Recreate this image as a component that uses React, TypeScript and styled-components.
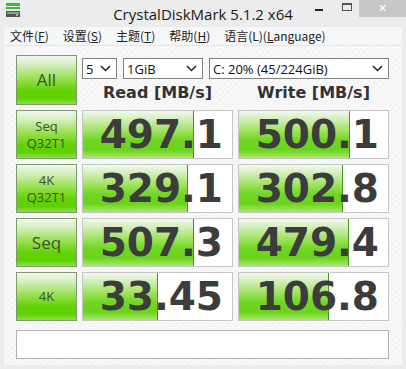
import React from "react";
import styled, { createGlobalStyle } from "styled-components";

const GlobalStyle = createGlobalStyle`
  html, body {
    margin: 0;
    padding: 0;
  }
  body {
    width: 406px;
    height: 369px;
    overflow: hidden;
    background: #ececec;
  }
`;

type Row = {
  label: string[];
  big?: boolean;
  read: string;
  write: string;
};

const rows: Row[] = [
  { label: ["Seq", "Q32T1"], read: "497.1", write: "500.1" },
  { label: ["4K", "Q32T1"], read: "329.1", write: "302.8" },
  { label: ["Seq"], big: true, read: "507.3", write: "479.4" },
  { label: ["4K"], read: "33.45", write: "106.8" },
];

const menus: [string, string, string][] = [
  ["文件(", "F", ")"],
  ["设置(", "S", ")"],
  ["主题(", "T", ")"],
  ["帮助(", "H", ")"],
  ["语言(L)(", "L", "anguage)"],
];

// log scale meter, like CDM
const barWidth = (v: string) => Math.max(0, 27 + 30.7 * Math.log10(parseFloat(v)));

const DriveIcon = () => (
  <svg width="16" height="16" viewBox="0 0 16 16">
    <rect x="1" y="1" width="14" height="3" fill="#3cb83c" />
    <rect x="1" y="5" width="14" height="2" fill="#3cb83c" />
    <rect x="1" y="9" width="14" height="6" fill="#555" />
    <rect x="2" y="10" width="12" height="2" fill="#999" />
    <rect x="11" y="12" width="2" height="2" fill="#7ad27a" />
  </svg>
);

const Chevron = () => (
  <svg width="11" height="7" viewBox="0 0 11 7">
    <path d="M1 1 L5.5 5.5 L10 1" fill="none" stroke="#222" strokeWidth="1.5" />
  </svg>
);

const App = () => {
  return (
    <Window>
      <GlobalStyle />
      <TitleBar>
        <IconSlot>
          <DriveIcon />
        </IconSlot>
        <Title>CrystalDiskMark 5.1.2 x64</Title>
        <Controls>
          <MinBtn>
            <Dash />
          </MinBtn>
          <MaxBtn>
            <Square />
          </MaxBtn>
          <CloseBtn>✕</CloseBtn>
        </Controls>
      </TitleBar>
      <Client>
        <MenuBar>
          {menus.map(([a, key, b]) => (
            <MenuItem key={a}>
              {a}
              <u>{key}</u>
              {b}
            </MenuItem>
          ))}
        </MenuBar>
        <Body>
          <Grid>
            <TestButton $big>All</TestButton>
            <TopRight>
              <Selects>
                <Select $w={35}>
                  5<Chevron />
                </Select>
                <Select $w={80}>
                  1GiB<Chevron />
                </Select>
                <Select $w={180}>
                  C: 20% (45/224GiB)<Chevron />
                </Select>
              </Selects>
              <Headers>
                <Header>Read [MB/s]</Header>
                <Header>Write [MB/s]</Header>
              </Headers>
            </TopRight>
            {rows.map((r) => (
              <React.Fragment key={r.label.join() + r.read}>
                <TestButton $big={r.big}>
                  {r.label.map((l) => (
                    <span key={l}>{l}</span>
                  ))}
                </TestButton>
                <Meter>
                  <Bar style={{ width: barWidth(r.read) }} />
                  <Value>{r.read}</Value>
                </Meter>
                <Meter>
                  <Bar style={{ width: barWidth(r.write) }} />
                  <Value>{r.write}</Value>
                </Meter>
              </React.Fragment>
            ))}
          </Grid>
          <Status />
        </Body>
      </Client>
    </Window>
  );
};

export default App;

const Window = styled.div`
  width: 406px;
  height: 369px;
  display: flex;
  flex-direction: column;
  background: #ececec;
  box-sizing: border-box;
`;

const TitleBar = styled.div`
  height: 27px;
  display: grid;
  grid-template-columns: 1fr auto 1fr;
  background: #ececec;
`;

const IconSlot = styled.div`
  padding: 2px 0 0 5px;
`;

const Title = styled.div`
  font-family: "Open Sans", "Noto Sans", sans-serif;
  font-size: 15px;
  color: #1a1a1a;
  line-height: 27px;
  padding-top: 1px;
`;

const Controls = styled.div`
  display: flex;
  justify-content: flex-end;
  align-items: flex-start;
`;

const MinBtn = styled.div`
  width: 27px;
  height: 17px;
  display: flex;
  align-items: center;
  justify-content: center;
  padding-top: 2px;
  box-sizing: border-box;
`;

const Dash = styled.div`
  width: 8px;
  height: 2px;
  background: #222;
`;

const MaxBtn = styled.div`
  width: 27px;
  height: 17px;
  display: flex;
  justify-content: center;
  padding-top: 3px;
  padding-left: 2px;
  box-sizing: border-box;
`;

const Square = styled.div`
  width: 10px;
  height: 8px;
  border: 1px solid #555;
  border-top-width: 2px;
  box-sizing: border-box;
`;

const CloseBtn = styled.div`
  width: 47px;
  height: 17px;
  background: #c7c7c7;
  color: #fff;
  font-family: "DejaVu Sans", sans-serif;
  font-size: 11px;
  display: flex;
  align-items: center;
  justify-content: center;
`;

const Client = styled.div`
  flex: 1;
  margin: 0 4px 4px 4px;
  display: flex;
  flex-direction: column;
  background: #f8f8f8;
`;

const MenuBar = styled.div`
  height: 18px;
  display: flex;
  align-items: center;
  padding-left: 6px;
  background: #f5f6f7;
  border-bottom: 1px solid #e6e6e6;
  font-family: "Noto Sans CJK SC", "Noto Sans", sans-serif;
  font-size: 12px;
  color: #222;
`;

const MenuItem = styled.div`
  padding-right: 14px;
  line-height: 18px;
  white-space: nowrap;
`;

const Body = styled.div`
  flex: 1;
  padding: 9px 0 0 12px;
  background: repeating-linear-gradient(
    135deg,
    #f9f9f9 0px,
    #f9f9f9 2px,
    #f4f4f4 2px,
    #f4f4f4 4px
  );
`;

const Grid = styled.div`
  display: grid;
  grid-template-columns: 61px 151px 151px;
  grid-template-rows: 50px repeat(4, 49px);
  column-gap: 5px;
  row-gap: 5px;
`;

const TestButton = styled.div<{ $big?: boolean }>`
  display: flex;
  flex-direction: column;
  align-items: center;
  justify-content: center;
  box-sizing: border-box;
  border: 1px solid #7c9a6c;
  background: linear-gradient(
    to bottom,
    #f2f8ee 0%,
    #d4efbe 18%,
    #96e04c 48%,
    #62d204 72%,
    #5fd000 88%,
    #8ee04a 100%
  );
  font-family: "Open Sans", "Noto Sans", sans-serif;
  font-size: ${(p) => (p.$big ? "17px" : "13px")};
  line-height: ${(p) => (p.$big ? "20px" : "17px")};
  color: #3b5230;
`;

const TopRight = styled.div`
  grid-column: 2 / 4;
  display: flex;
  flex-direction: column;
  padding-top: 3px;
`;

const Selects = styled.div`
  display: flex;
  gap: 6px;
`;

const Select = styled.div<{ $w: number }>`
  width: ${(p) => p.$w}px;
  height: 21px;
  box-sizing: border-box;
  border: 1px solid #828282;
  background: #fff;
  display: flex;
  align-items: center;
  justify-content: space-between;
  padding: 0 5px 0 3px;
  font-family: "Open Sans", "Noto Sans", sans-serif;
  font-size: 13px;
  color: #111;
`;

const Headers = styled.div`
  display: grid;
  grid-template-columns: 151px 151px;
  column-gap: 5px;
  flex: 1;
  align-items: center;
  padding-top: 1px;
`;

const Header = styled.div`
  text-align: center;
  font-family: "DejaVu Sans", Verdana, sans-serif;
  font-weight: bold;
  font-size: 16px;
  color: #333;
`;

const Meter = styled.div`
  position: relative;
  box-sizing: border-box;
  border: 1px solid #c6c6c6;
  background: #fff;
  display: flex;
  align-items: center;
  justify-content: flex-end;
  overflow: hidden;
`;

const Bar = styled.div`
  position: absolute;
  left: 0;
  top: 0;
  bottom: 0;
  border-right: 1px solid #3f9a1a;
  background: linear-gradient(
    to bottom,
    #f3f9ee 0%,
    #d8f0c4 15%,
    #a4e466 40%,
    #72d624 62%,
    #6ad41a 82%,
    #a8e86a 100%
  );
`;

const Value = styled.div`
  position: relative;
  padding-right: 9px;
  font-family: "DejaVu Sans", Verdana, sans-serif;
  font-weight: bold;
  font-size: 39px;
  line-height: 47px;
  color: #3c3c3c;
`;

const Status = styled.div`
  margin-top: 9px;
  width: 373px;
  height: 29px;
  box-sizing: border-box;
  border: 1px solid #b4b4b4;
  background: #fff;
`;
